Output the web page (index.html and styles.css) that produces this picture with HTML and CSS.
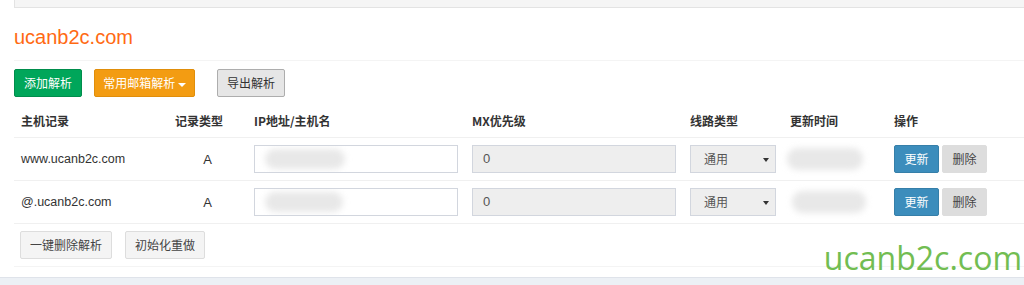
FILE: index.html
```html
<!DOCTYPE html>
<html lang="zh-CN">
<head>
<meta charset="utf-8">
<title>ucanb2c.com 解析</title>
<link rel="stylesheet" href="styles.css">
</head>
<body>
<div class="panel">
  <div class="topbar"></div>
  <h3 class="title">ucanb2c.com</h3>
  <div class="toolbar">
    <button class="btn btn-green">添加解析</button>
    <button class="btn btn-orange">常用邮箱解析 <span class="caret"></span></button>
    <button class="btn btn-export">导出解析</button>
  </div>
  <table class="grid">
    <colgroup>
      <col class="c1"><col class="c2"><col class="c3"><col class="c4"><col class="c5"><col class="c6"><col class="c7">
    </colgroup>
    <thead>
      <tr>
        <th>主机记录</th><th>记录类型</th><th>IP地址/主机名</th><th>MX优先级</th><th>线路类型</th><th>更新时间</th><th>操作</th>
      </tr>
    </thead>
    <tbody>
      <tr>
        <td class="host">www.ucanb2c.com</td>
        <td class="type">A</td>
        <td><div class="field"><span class="blur blur-a"></span></div></td>
        <td><div class="field field-off">0</div></td>
        <td><div class="select">通用<span class="arrow"></span></div></td>
        <td><span class="blur blur-t"></span></td>
        <td class="ops"><button class="btn btn-blue">更新</button><button class="btn btn-del">删除</button></td>
      </tr>
      <tr>
        <td class="host">@.ucanb2c.com</td>
        <td class="type">A</td>
        <td><div class="field"><span class="blur blur-b"></span></div></td>
        <td><div class="field field-off">0</div></td>
        <td><div class="select">通用<span class="arrow"></span></div></td>
        <td><span class="blur blur-t2"></span></td>
        <td class="ops"><button class="btn btn-blue">更新</button><button class="btn btn-del">删除</button></td>
      </tr>
      <tr class="foot">
        <td colspan="7"><button class="btn btn-plain">一键删除解析</button><button class="btn btn-plain">初始化重做</button></td>
      </tr>
    </tbody>
  </table>
  <div class="watermark">ucanb2c.com</div>
</div>
<div class="bottom"></div>
</body>
</html>
```
FILE: styles.css
```css
* { box-sizing: border-box; }
html, body { margin: 0; padding: 0; background: #fff; }
body {
  font-family: "Liberation Sans", "Noto Sans CJK SC", sans-serif;
  font-size: 12px;
  color: #333;
  width: 1024px;
  height: 285px;
  overflow: hidden;
}
.panel {
  position: relative;
  padding-left: 14px;
  height: 277px;
}
.topbar {
  height: 8px;
  background: #f5f5f5;
  border-left: 1px solid #e3e3e3;
  border-bottom: 1px solid #e3e3e3;
}
.title {
  margin: 0;
  padding-top: 17px;
  height: 53px;
  font-family: "Liberation Sans", sans-serif;
  font-weight: normal;
  font-size: 20px;
  line-height: 24px;
  color: #ff6a13;
  border-bottom: 1px solid #f4f4f4;
}
.toolbar {
  display: flex;
  gap: 12px;
  margin-top: 8px;
  height: 28px;
}
.btn {
  font-family: "Noto Sans CJK SC", sans-serif;
  font-size: 12px;
  height: 28px;
  padding: 0 9px;
  border: 1px solid transparent;
  border-radius: 2px;
  cursor: pointer;
  line-height: 26px;
  white-space: nowrap;
}
.btn-green { background: #00a65a; border-color: #008d4c; color: #fff; width: 68px; }
.btn-orange { background: #f39c12; border-color: #e08e0b; color: #fff; width: 101px; padding: 0 6px; }
.btn-export { background: #e6e6e6; border-color: #adadad; color: #333; width: 68px; margin-left: 10px; }
.caret {
  display: inline-block;
  width: 0; height: 0;
  border-left: 4px solid transparent;
  border-right: 4px solid transparent;
  border-top: 4px solid #fff;
  vertical-align: middle;
  margin-left: 0;
}
.grid {
  width: 1010px;
  border-collapse: collapse;
  table-layout: fixed;
  margin-top: 8px;
}
.c1 { width: 154px; }
.c2 { width: 79px; }
.c3 { width: 218px; }
.c4 { width: 218px; }
.c5 { width: 100px; }
.c6 { width: 104px; }
.c7 { width: 137px; }
.grid th {
  font-family: "Noto Sans CJK SC", sans-serif;
  font-weight: bold;
  text-align: left;
  padding: 7px;
  line-height: 18px;
  height: 32px;
  border-bottom: 1px solid #f0f0f0;
  color: #333;
}
.grid td {
  padding: 7px;
  height: 43px;
  border-bottom: 1px solid #f0f0f0;
  vertical-align: middle;
}
.grid td.host { font-size: 12.5px; color: #333; }
.grid td.type { text-align: center; font-size: 13px; padding-left: 7px; }
.field {
  position: relative;
  height: 28px;
  border: 1px solid #d2d6de;
  background: #fff;
  padding: 0 10px;
  line-height: 26px;
  font-size: 13px;
  color: #555;
  overflow: hidden;
}
.field-off { background: #eee; }
.select {
  position: relative;
  height: 28px;
  border: 1px solid #d2d6de;
  background: #eee;
  padding: 0 13px;
  line-height: 26px;
  font-family: "Noto Sans CJK SC", sans-serif;
  color: #555;
}
.arrow {
  position: absolute;
  right: 6px;
  top: 12px;
  border-left: 3px solid transparent;
  border-right: 3px solid transparent;
  border-top: 4px solid #333;
}
.blur {
  display: block;
  background: #e8e8e8;
  filter: blur(3px);
  border-radius: 12px;
}
.blur-a { position: absolute; left: 10px; top: 3px; width: 80px; height: 20px; }
.blur-b { position: absolute; left: 10px; top: 3px; width: 78px; height: 20px; }
.blur-t { width: 76px; height: 22px; margin-left: -3px; }
.blur-t2 { width: 74px; height: 22px; margin-left: 2px; }
.ops { white-space: nowrap; }
.btn-blue { background: #3c8dbc; border-color: #367fa9; color: #fff; width: 45px; padding: 0; }
.btn-del { background: #ddd; border-color: #ddd; color: #444; width: 45px; padding: 0; margin-left: 3px; }
.foot td { padding: 7px 6px; height: 42px; border-bottom: 1px solid #f4f4f4; }
.btn-plain { background: #f4f4f4; border-color: #ddd; color: #444; margin-right: 13px; padding: 0 9px; }
.watermark {
  position: absolute;
  right: 2px;
  top: 238px;
  font-family: "Open Sans", sans-serif;
  font-size: 32px;
  line-height: 40px;
  color: #72bd52;
}
.bottom {
  height: 8px;
  background: #ecf0f5;
  border-top: 1px solid #dfe3ea;
}
```
